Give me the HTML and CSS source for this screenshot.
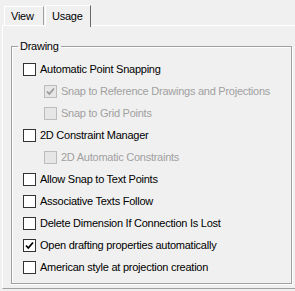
FILE: index.html
```
<!DOCTYPE html>
<html lang="en">
<head>
    <meta charset="UTF-8">
    <title>Usage</title>
    <link rel="stylesheet" href="styles.css">
</head>
<body>

<div class="tabs">
    <div class="tab">View</div>
    <div class="tab active">Usage</div>
</div>

<div class="panel">
    <fieldset class="group">
        <legend>Drawing</legend>
        <div class="rows">
            <div class="row"><span class="box"></span>Automatic Point Snapping</div>
            <div class="row sub disabled"><span class="box checked"><svg width="11" height="11" viewBox="0 0 11 11"><path d="M2 5.5 L4.3 8 L9 2.5" fill="none" stroke="#9a9a9a" stroke-width="1.8"/></svg></span>Snap to Reference Drawings and Projections</div>
            <div class="row sub disabled"><span class="box"></span>Snap to Grid Points</div>
            <div class="row"><span class="box"></span>2D Constraint Manager</div>
            <div class="row sub disabled"><span class="box"></span>2D Automatic Constraints</div>
            <div class="row"><span class="box"></span>Allow Snap to Text Points</div>
            <div class="row"><span class="box"></span>Associative Texts Follow</div>
            <div class="row"><span class="box"></span>Delete Dimension If Connection Is Lost</div>
            <div class="row"><span class="box checked"><svg width="11" height="11" viewBox="0 0 11 11"><path d="M2 5.5 L4.3 8 L9 2.5" fill="none" stroke="#000" stroke-width="1.8"/></svg></span>Open drafting properties automatically</div>
            <div class="row"><span class="box"></span>American style at projection creation</div>
        </div>
    </fieldset>
</div>

</body>
</html>
```

FILE: styles.css
```
body {
    margin: 0;
    background-color: #f0f0f0;
    font-family: "Liberation Sans", Arial, sans-serif;
    font-size: 11px;
    letter-spacing: -0.25px;
    color: #000;
    overflow: hidden;
    width: 295px;
    height: 291px;
}
.tabs {
    display: flex;
    align-items: flex-end;
    height: 26px;
    padding-left: 4px;
}
.tab {
    box-sizing: border-box;
    height: 19px;
    width: 40px;
    padding: 3px 0 0 6px;
    border-top: 1px solid #fff;
    border-left: 1px solid #fff;
    border-right: 1px solid #a0a0a0;
    margin-bottom: 1px;
}
.tab.active {
    height: 22px;
    width: 46px;
    padding: 4px 0 0 6px;
    margin-left: 1px;
    margin-bottom: -1px;
    border-right: 1px solid #696969;
    background-color: #f0f0f0;
    position: relative;
    z-index: 1;
}
.panel {
    box-sizing: border-box;
    width: 293px;
    height: 264px;
    margin-left: 2px;
    margin-top: -1px;
    border-top: 1px solid #fff;
    border-left: 1px solid #fff;
    border-bottom: 1px solid #a0a0a0;
    padding: 13px 0 0 8px;
}
.group {
    box-sizing: border-box;
    width: 281px;
    height: 245px;
    margin: 0;
    padding: 0;
    border: 1px solid #a0a0a0;
    box-shadow: inset 1px 1px 0 #fff, 1px 1px 0 #fff;
}
.group legend {
    margin-left: 6px;
    padding: 0 2px;
    line-height: 14px;
}
.rows {
    padding-top: 5px;
}
.row {
    display: flex;
    align-items: center;
    height: 22px;
    padding-left: 11px;
}
.row.sub {
    padding-left: 32px;
}
.box {
    box-sizing: border-box;
    width: 13px;
    height: 13px;
    border: 1px solid #333;
    background-color: #fff;
    margin-right: 4px;
    display: flex;
    align-items: center;
    justify-content: center;
    flex-shrink: 0;
}
.disabled {
    color: #a0a0a0;
}
.disabled .box {
    border-color: #bcbcbc;
    background-color: #e6e6e6;
}
```
